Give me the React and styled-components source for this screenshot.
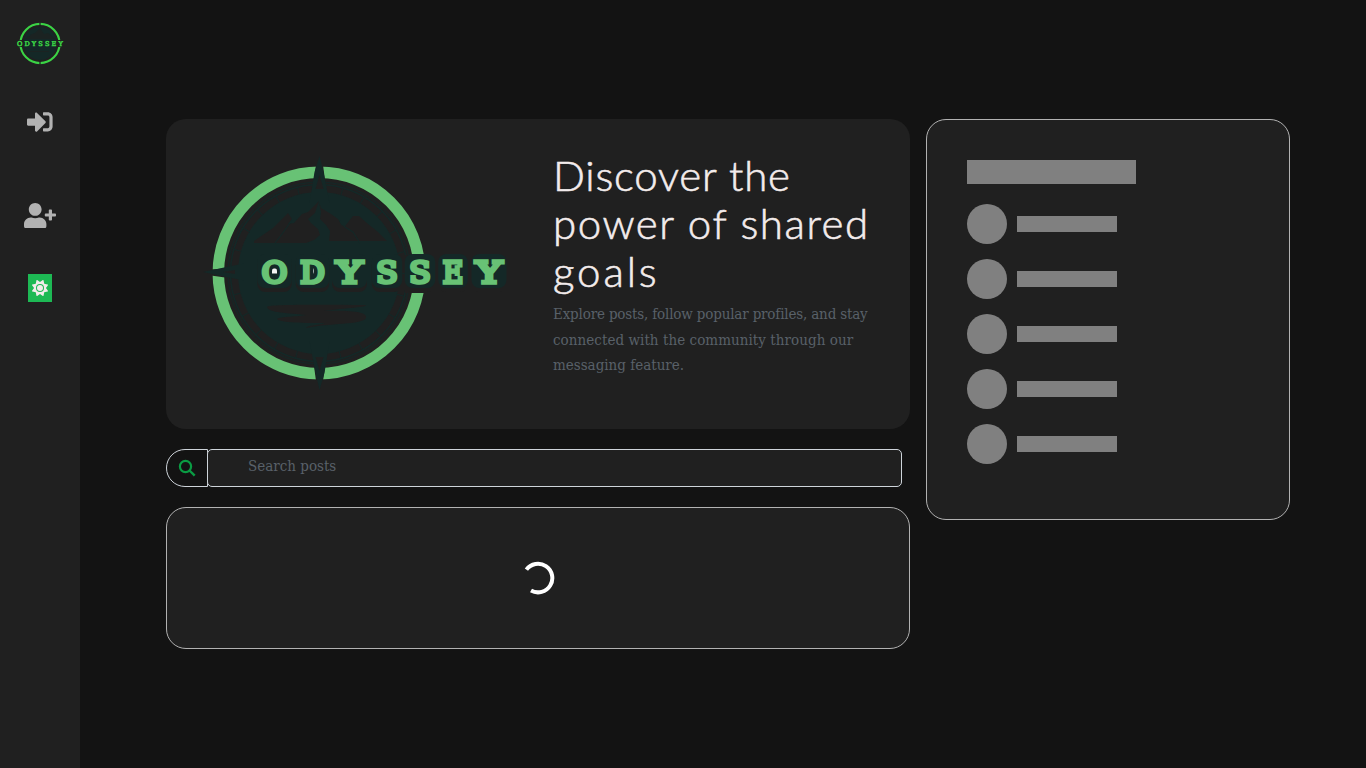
import React from 'react';
import styled, { createGlobalStyle } from 'styled-components';
import { FaSignInAlt, FaUserPlus } from 'react-icons/fa';
import { FaSun } from 'react-icons/fa6';

const GlobalStyle = createGlobalStyle`
  * { box-sizing: border-box; }
  body { margin: 0; background: #131313; overflow: hidden; }
`;

const Page = styled.div`
  display: flex;
  height: 768px;
  background: #131313;
  font-family: 'DejaVu Serif Condensed', 'DejaVu Serif', serif;
`;
const Sidebar = styled.nav`
  width: 80px;
  flex: none;
  background: #202020;
  display: flex;
  flex-direction: column;
  align-items: center;
  color: #b2b2b2;
`;
const BrandLink = styled.a`
  display: block;
  margin-top: 20px;
  height: 48px;
`;
const NavLink = styled.a`
  display: flex;
  margin-top: ${(p) => p.$top}px;
  svg { width: ${(p) => p.$w}px; height: 25.6px; }
`;
const ThemeButton = styled.button`
  display: flex;
  align-items: center;
  justify-content: center;
  width: 24px;
  height: 28px;
  margin: 45.8px 0 0;
  padding: 0;
  border: 0;
  background: #1db954;
  color: #f3ecec;
  font-size: 16px;
`;
const Main = styled.main`
  flex: 1;
  display: flex;
  align-items: flex-start;
  gap: 16px;
  padding: 119px 76px 0 86px;
`;
const Feed = styled.section`
  width: 744px;
  display: flex;
  flex-direction: column;
  gap: 20px;
`;
const Hero = styled.header`
  height: 310px;
  display: flex;
  background: #202020;
  border-radius: 20px;
`;
const HeroArt = styled.div`
  width: 387px;
  flex: none;
  padding: 34px 0 0 34px;
`;
const HeroText = styled.div`
  padding-top: 32px;
  white-space: nowrap;
`;
const Title = styled.h1`
  margin: 0;
  font: 300 42px/48px Lato, sans-serif;
  color: #f3ecec;
  -webkit-text-stroke: 0.6px #f3ecec;
`;
const Line = styled.span`
  display: block;
  letter-spacing: ${(p) => p.$spacing}px;
`;
const Lead = styled.p`
  margin: 7px 0 0;
  font-size: 15px;
  line-height: 25.5px;
  color: #596169;
`;
const SearchBar = styled.form`
  display: flex;
  height: 38px;
  padding-right: 8px;
`;
const SearchButton = styled.button`
  width: 42px;
  flex: none;
  display: flex;
  align-items: center;
  justify-content: center;
  padding: 0;
  background: #131313;
  border: 1px solid #ced4da;
  border-radius: 20px 0 0 20px;
`;
const SearchInput = styled.input`
  flex: 1;
  min-width: 0;
  margin-left: -1px;
  padding: 0 40px 4px;
  background: #202020;
  border: 1px solid #ced4da;
  border-radius: 5px;
  font: 15px 'DejaVu Serif Condensed', 'DejaVu Serif', serif;
  &::placeholder { color: #596169; opacity: 1; }
`;
const Card = styled.div`
  background: #202020;
  border: 1px solid #b2b2b2;
  border-radius: 20px;
`;
const LoadingCard = styled(Card)`
  height: 142px;
  display: flex;
  align-items: center;
  justify-content: center;
`;
const Profiles = styled(Card)`
  flex: 1;
  height: 401px;
  padding: 40px;
`;
const ProfileRow = styled.div`
  display: flex;
  align-items: center;
  gap: 10px;
  margin-bottom: 15px;
`;
const Avatar = styled.div`
  width: 40px;
  height: 40px;
  border-radius: 50%;
  background: #808080;
`;
const Bar = styled.div`
  width: ${(p) => p.$w}px;
  height: ${(p) => p.$h}px;
  margin-bottom: ${(p) => p.$gap || 0}px;
  background: #808080;
`;
const LogoWord = styled.text`
  font-family: 'DejaVu Serif', serif;
  font-weight: normal;
`;

const letters = [
  ['O', 74.5, 25.5], ['D', 112.5, 24.5], ['Y', 149.5, 26], ['S', 187, 21.5],
  ['S', 220, 21.5], ['E', 253, 20.5], ['Y', 289, 26],
];

function LetterPads({ dy, fill }) {
  return letters.map(([, x, w], i) => (
    <rect key={i} x={x - w / 2 - 4.5} y={101 + dy} width={w + 9} height="34" rx="8" fill={fill} />
  ));
}

function HeroLogo() {
  return (
    <svg width="320" height="240" viewBox="0 0 320 240" role="img" aria-label="Odyssey">
      <circle cx="119" cy="120" r="81" fill="#142827" />
      <g fill="none" stroke="#142827">
        <circle cx="119" cy="120" r="91" strokeWidth="1" />
        <circle cx="119" cy="120" r="84.5" strokeWidth="8" strokeDasharray="1 21.12" />
        <circle cx="119" cy="120" r="88.5" strokeWidth="1.6" />
      </g>
      <circle cx="119" cy="120" r="100.7" fill="none" stroke="#68c275" strokeWidth="11.5" />
      <path d="M205 102h22v38h-22z" fill="#202020" />
      <path d="M116 12h7l2 15h-11zM114 213h11l-2 15h-7zM11 116.5l14 -1v9l-14-2z" fill="#202020" />
      <path d="M119.5 3l4 16 6 31h-20l5-31zM119.5 237l-4-17-6-32h20l-5 32zM3 119l21-4.5 20-4v17l-20-4z" fill="#142827" />
      <path d="M119.5 22l4 14h-8zM119.5 218l4-14h-8zM23 119l12-2v4z" fill="#202020" />
      <path d="M54 88l19-13 5-5 10-10 4 6-4 5 6-1 8-9 6-2 11-11-4 12-7 6 3 4 7 6 2 6-6 5-8 3H54z" fill="#202020" />
      <path d="M119 49l2 6 10 6 7 5 4 7-5-2 8 2 8-10 6 0 9 8 10 8 9 9H129l1-10-4-6-6-6 1-7z" fill="#202020" />
      <path d="M92 67l-5 7-5 7-7 9M140 68l5 6 8 5 7 11" fill="none" stroke="#142827" strokeWidth="1.2" />
      <path d="M67 154c2-3 60-2 98-2 6 2-21 3-41 6 28-1 44 1 42 7-3 7-38 5-60 10 1-3 14-3 19-5-19 0-45 0-48-4 3-3 22-2 29-4-17-2-38-2-39-8z" fill="#202020" />
      <LetterPads dy={4} fill="#202020" />
      <LetterPads dy={0} fill="#142827" />
      <g fill="#68c275" stroke="#68c275" strokeWidth="3.6" strokeLinejoin="miter">
        {letters.map(([c, x, w], i) => (
          <LogoWord key={i} x={x - w / 2} y="130" fontSize="29.5" textLength={w} lengthAdjust="spacingAndGlyphs">{c}</LogoWord>
        ))}
      </g>
      <path d="M72 120.5v-3q0-2 2-2h1q2 0 2 2v3z" fill="#f4f4f4" />
      <path d="M113 115q2 3 0 6z" fill="#a7b2b1" />
    </svg>
  );
}

function SmallLogo() {
  return (
    <svg width="50" height="48" viewBox="0 0 50 48" role="img" aria-label="Odyssey">
      <circle cx="25" cy="23.5" r="16.5" fill="#142827" />
      <circle cx="25" cy="23.5" r="19.6" fill="none" stroke="#3bd345" strokeWidth="2.1" />
      <path d="M24.4 2h1.2v5h-1.2zM24.4 40h1.2v6h-1.2zM1 20h48v7H1z" fill="#202020" />
      <path d="M8.8 20h32.4v7H8.8z" fill="#142827" />
      <path d="M10 19l7-5 3-1 5-5 4 6 4-1 7 6zM15 31h19v1H15z" fill="#202020" opacity=".6" />
      <LogoWord x="1.9" y="25.5" fontSize="6.6" fill="#3bd345" stroke="#3bd345" strokeWidth=".5" textLength="46">ODYSSEY</LogoWord>
    </svg>
  );
}

export default function App() {
  return (
    <>
      <GlobalStyle />
      <Page>
        <Sidebar>
          <BrandLink><SmallLogo /></BrandLink>
          <NavLink $top={40.5} $w={25.6}><FaSignInAlt /></NavLink>
          <NavLink $top={68.5} $w={32}><FaUserPlus /></NavLink>
          <ThemeButton aria-label="Toggle theme"><FaSun /></ThemeButton>
        </Sidebar>
        <Main>
          <Feed>
            <Hero>
              <HeroArt><HeroLogo /></HeroArt>
              <HeroText>
                <Title>
                  <Line $spacing={0.8}>Discover the</Line>
                  <Line $spacing={1.55}>power of shared</Line>
                  <Line $spacing={2.9}>goals</Line>
                </Title>
                <Lead>
                  <Line $spacing={-0.17}>Explore posts, follow popular profiles, and stay</Line>
                  <Line $spacing={0.05}>connected with the community through our</Line>
                  <Line $spacing={0}>messaging feature.</Line>
                </Lead>
              </HeroText>
            </Hero>
            <SearchBar>
              <SearchButton type="button" aria-label="Search">
                <svg width="18" height="18" viewBox="0 0 18 18" fill="none" stroke="#0a9b43" strokeWidth="2.2">
                  <circle cx="7.5" cy="7.5" r="5.6" />
                  <path d="M11.5 11.5l5.2 5.2" strokeWidth="2.4" />
                </svg>
              </SearchButton>
              <SearchInput placeholder="Search posts" />
            </SearchBar>
            <LoadingCard>
              <svg width="34" height="34" viewBox="0 0 34 34" fill="none" stroke="#fff" strokeWidth="4">
                <path d="M5.4 8.7A14.3 14.3 0 1 1 10 29.5" />
              </svg>
            </LoadingCard>
          </Feed>
          <Profiles>
            <Bar $w={169} $h={24} $gap={20} />
            {[0, 1, 2, 3, 4].map((n) => (
              <ProfileRow key={n}><Avatar /><Bar $w={100} $h={16} /></ProfileRow>
            ))}
          </Profiles>
        </Main>
      </Page>
    </>
  );
}
